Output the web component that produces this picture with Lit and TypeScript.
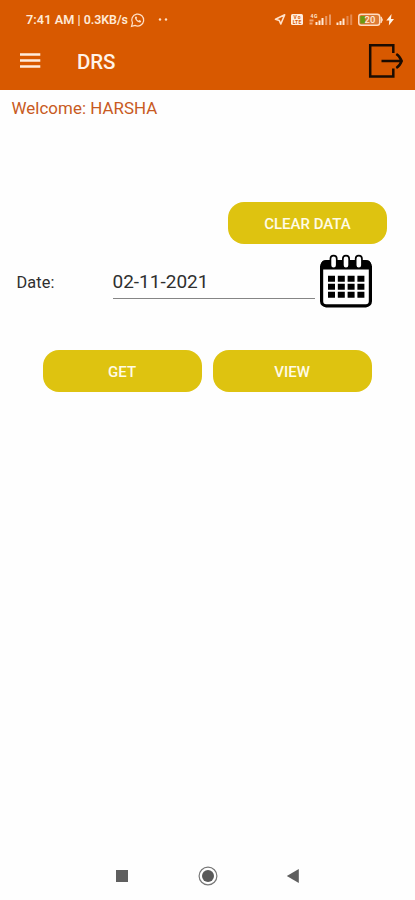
import { LitElement, html, css } from "lit";
import { customElement } from "lit/decorators.js";

@customElement("status-bar")
class StatusBar extends LitElement {
  static styles = css`
    :host { display: flex; height: 38px; align-items: center; color: #ffe9d6; box-sizing: border-box; padding: 2px 20px 0 26px; }
    .clock { font-size: 12.7px; font-weight: 600; line-height: 16px; letter-spacing: 0.08px; white-space: pre; }
    .net { font-size: 12.4px; font-weight: 600; line-height: 16px; letter-spacing: -0.03px; white-space: pre; }
    .chat { margin-left: 2px; }
    .icons { margin-left: auto; }
    svg { display: block; }
    .tiny { font: 700 5px Roboto, sans-serif; }
    .level { font: 500 9.5px Roboto, sans-serif; }
  `;
  render() {
    return html`
      <span class="clock">7:41 AM</span><span class="net"> | 0.3KB/s</span>
      <svg class="chat" width="42" height="16" viewBox="0 0 42 16">
        <path d="M1.5 14.3 2.5 11A6 6 0 1 1 5 13.4Z" fill="none" stroke="#ffe0c8" stroke-width="1.2" />
        <path d="M5.3 4.8c-1 1.2.6 3.6 1.7 4.5 1.2 1 3 1.7 3.9.6l.3-1-1.7-.9-.9.8C7.600 8.300 7 7.600 6.500 6.700l.7-.8-.8-1.500z" fill="#ffe0c8" />
        <circle cx="30" cy="7.500" r="1.200" fill="#ffe0c8" />
        <circle cx="36" cy="7.500" r="1.200" fill="#ffe0c8" />
      </svg>
      <svg class="icons" width="122" height="16" viewBox="0 0 122 16">
        <path d="M2.500 7.200 11.700 2.800 7.800 12 6.300 8.600Z" fill="none" stroke="#ffe0c8" stroke-width="1.600" stroke-linejoin="round" />
        <rect x="18" y="2" width="12" height="11" rx="1.500" fill="#ffeddd" />
        <text class="tiny" x="20.500" y="7.300" fill="#d85900" textLength="7">Vo</text>
        <text class="tiny" x="19.700" y="11.800" fill="#d85900" textLength="8.600">LTE</text>
        <text class="tiny" x="37.500" y="5.500" fill="#ffe9d6" textLength="7">4G</text>
        <path d="M36.500 8.500h4M36.500 11.500h3" stroke="#f3a673" stroke-width="1.800" />
        <path d="M43.500 13v-3M46.500 13v-4.500M49.500 13V6" stroke="#ffe9d6" stroke-width="2" />
        <path d="M53.200 13V4M57 13V2.500" stroke="#e99a66" stroke-width="2" />
        <path d="M64.500 13v-2.500M67.500 13v-4M70.500 13V6.500" stroke="#ffe9d6" stroke-width="2" />
        <path d="M74.500 13V4M78.200 13V2.500" stroke="#e58a50" stroke-width="2" />
        <rect x="85.700" y="2.200" width="21" height="11" rx="2.500" fill="#dc7a35" stroke="#ffdcc0" stroke-width="1.400" />
        <rect x="87.300" y="4" width="5" height="7.500" fill="#6b9a10" />
        <path d="M108 4.800q2.800 3-0 6z" fill="#ffdcc0" stroke="#ffdcc0" />
        <text class="level" x="91.500" y="11.200" fill="#ffe9d6" textLength="11">20</text>
        <path d="M118.600 2 113.300 8.500h3L115.800 13.500 121 7h-3.100z" fill="#fff3e6" />
      </svg>
    `;
  }
}

@customElement("calendar-icon")
class CalendarIcon extends LitElement {
  static styles = css`:host, svg { display: block; }`;
  render() {
    const columns = [8, 17.8, 27.6, 37.4];
    const rows = [21.8, 29.8, 37.8];
    return html`
      <svg width="52" height="54" viewBox="0 0 52 54">
        <rect x="1.600" y="8" width="48.800" height="43.800" rx="4.500" fill="#fff" stroke="#000" stroke-width="3.200" />
        <path d="M1 15.500V11q0-5 5-5h40q5 0 5 5v4.500z" fill="#000" />
        <path d="M13.600 10V4.700M26 10V4.700M38.800 10V4.700" stroke="#000" stroke-width="8" stroke-linecap="round" />
        <path d="M13.600 11.300V4.700M26 11.300V4.700M38.800 11.300V4.700" stroke="#fff" stroke-width="4.600" stroke-linecap="round" />
        <path d="${rows.map((y) => columns.map((x) => `M${x} ${y}h7v6h-7z`).join("")).join("")}" fill="#000" />
      </svg>
    `;
  }
}

@customElement("app-root")
class AppRoot extends LitElement {
  static styles = css`
    :host { display: flex; flex-direction: column; width: 415px; height: 900px; background: #fefefe; font-family: Roboto, sans-serif; overflow: hidden; }
    svg { display: block; }
    header { height: 90px; background: #d85900; }
    .bar { display: flex; align-items: center; height: 46px; padding: 0 11px 0 20px; }
    .title { margin: 2px 0 0 36px; color: #fff3e8; font-size: 20.5px; font-weight: 500; line-height: 24px; letter-spacing: -0.1px; }
    .exit { margin-left: auto; }
    .welcome { padding: 8px 0 0 11.5px; height: 104px; color: #c85a22; font-size: 16.9px; line-height: 20px; letter-spacing: 0.05px; }
    .actions { display: flex; justify-content: flex-end; padding-right: 28px; }
    button { width: 159px; height: 42px; border: 0; border-radius: 16px; padding: 2px 0 0; background: #dec310; color: #fffbe6; font: 500 15px/40px Roboto, sans-serif; letter-spacing: 0; }
    .date { display: flex; height: 54px; margin-top: 10px; padding-left: 16.5px; color: #2f2f2f; }
    .label { width: 96px; padding-top: 19px; font-size: 16.3px; line-height: 20px; letter-spacing: 0.15px; }
    .field { width: 202px; height: 45px; box-sizing: border-box; padding-top: 16px; border-bottom: 1px solid #858585; font-size: 19px; line-height: 24px; }
    .calendar { margin-left: 5.500px; }
    .pair { display: flex; gap: 11px; margin: 42px 0 0 42.6px; }
    nav { display: flex; justify-content: space-between; align-items: center; height: 24px; margin: auto 115px 12.500px; }
  `;
  render() {
    return html`
      <header>
        <status-bar></status-bar>
        <div class="bar">
          <svg width="21" height="16" viewBox="0 0 21 16">
            <path d="M0 1.500h20.300M0 7.500h20.300M0 13.500h20.300" stroke="#ffecdc" stroke-width="2.600" />
          </svg>
          <span class="title">DRS</span>
          <svg class="exit" width="36" height="36" viewBox="0 0 36 36">
            <path d="M25.300 10V2.200H2.200v31.300h23.100V25.500M13.500 18h20M28.300 11q3.400 2 5.400 7-2 5-5.400 7" fill="none" stroke="#1b0c02" stroke-width="2.500" />
          </svg>
        </div>
      </header>
      <div class="welcome">Welcome: HARSHA</div>
      <div class="actions"><button>CLEAR DATA</button></div>
      <div class="date">
        <span class="label">Date:</span>
        <div class="field">02-11-2021</div>
        <calendar-icon class="calendar"></calendar-icon>
      </div>
      <div class="pair"><button>GET</button><button>VIEW</button></div>
      <nav>
        <svg width="14" height="14" viewBox="0 0 14 14"><rect x="1" y="1" width="12" height="12" fill="#5f5f5f" /></svg>
        <svg width="20" height="20" viewBox="0 0 20 20">
          <circle cx="10" cy="10" r="8.900" fill="none" stroke="#777" stroke-width="1.200" />
          <circle cx="10" cy="10" r="6" fill="#595959" />
        </svg>
        <svg width="14" height="16" viewBox="0 0 14 16"><path d="M.8 8 12.800 1v14z" fill="#5f5f5f" /></svg>
      </nav>
    `;
  }
}
